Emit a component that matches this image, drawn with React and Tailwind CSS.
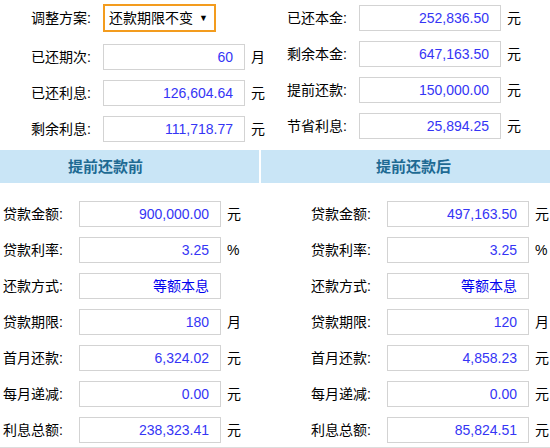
import React from 'react';

// one labelled number box with its unit
function Field({ label, value, unit, labelClass, link }) {
  return (
    <div className="flex items-center h-[26px]">
      <div className={'shrink-0 ' + labelClass}>{label}:</div>
      <div className="shrink-0 w-[142px] h-[26px] border border-[#d3d3d3] bg-white flex items-center justify-end pr-[11px]">
        <span className={link ? 'text-[#0000ee]' : 'text-[#3535f5]'}>{value}</span>
      </div>
      {unit && <span className="shrink-0 ml-[6px] whitespace-nowrap">{unit}</span>}
    </div>
  );
}

const topLeft = [
  ['已还期次', '60', '月'],
  ['已还利息', '126,604.64', '元'],
  ['剩余利息', '111,718.77', '元'],
];

const topRight = [
  ['已还本金', '252,836.50', '元'],
  ['剩余本金', '647,163.50', '元'],
  ['提前还款', '150,000.00', '元'],
  ['节省利息', '25,894.25', '元'],
];

const before = [
  ['贷款金额', '900,000.00', '元'],
  ['贷款利率', '3.25', '%'],
  ['还款方式', '等额本息', '', true],
  ['贷款期限', '180', '月'],
  ['首月还款', '6,324.02', '元'],
  ['每月递减', '0.00', '元'],
  ['利息总额', '238,323.41', '元'],
];

const after = [
  ['贷款金额', '497,163.50', '元'],
  ['贷款利率', '3.25', '%'],
  ['还款方式', '等额本息', '', true],
  ['贷款期限', '120', '月'],
  ['首月还款', '4,858.23', '元'],
  ['每月递减', '0.00', '元'],
  ['利息总额', '85,824.51', '元'],
];

export default function App() {
  return (
    <div className="w-[550px] h-[448px] overflow-hidden bg-white text-[14px] leading-none text-black font-['Liberation_Sans','Noto_Sans_CJK_SC',sans-serif] border-b border-[#dddddd]">
      {/* top section */}
      <div className="flex h-[150px]">
        <div className="w-[256px] shrink-0 pt-[4px] flex flex-col gap-[10px]">
          <div className="flex items-center h-[28px] mb-[2px]">
            <div className="shrink-0 w-[91px] text-right">调整方案:</div>
            <div className="shrink-0 ml-[12px] w-[113px] h-[28px] border-2 border-[#f39c1e] flex items-center justify-between pl-[4px] pr-[6px]">
              <span>还款期限不变</span>
              <span className="text-[9px]">▼</span>
            </div>
          </div>
          {topLeft.map(([l, v, u]) => (
            <Field key={l} label={l} value={v} unit={u} labelClass="w-[91px] text-right mr-[12px]" />
          ))}
        </div>
        <div className="pt-[5px] flex flex-col gap-[10px]">
          {topRight.map(([l, v, u]) => (
            <Field key={l} label={l} value={v} unit={u} labelClass="w-[91px] text-right mr-[12px]" />
          ))}
        </div>
      </div>

      {/* section headers */}
      <div className="flex gap-[2px] h-[33px]">
        <div className="w-[259px] bg-[#c9e5f6] flex items-center pl-[68px] font-bold text-[15px] text-[#1e6a93]">
          提前还款前
        </div>
        <div className="flex-1 bg-[#c9e5f6] flex items-center pl-[115px] font-bold text-[15px] text-[#1e6a93]">
          提前还款后
        </div>
      </div>

      {/* before / after */}
      <div className="flex pt-[18px]">
        <div className="w-[311px] shrink-0 pl-[3px] flex flex-col gap-[10px]">
          {before.map(([l, v, u, link]) => (
            <Field key={l} label={l} value={v} unit={u} link={link} labelClass="w-[76px]" />
          ))}
        </div>
        <div className="flex flex-col gap-[10px]">
          {after.map(([l, v, u, link]) => (
            <Field key={l} label={l} value={v} unit={u} link={link} labelClass="w-[76px]" />
          ))}
        </div>
      </div>
    </div>
  );
}
